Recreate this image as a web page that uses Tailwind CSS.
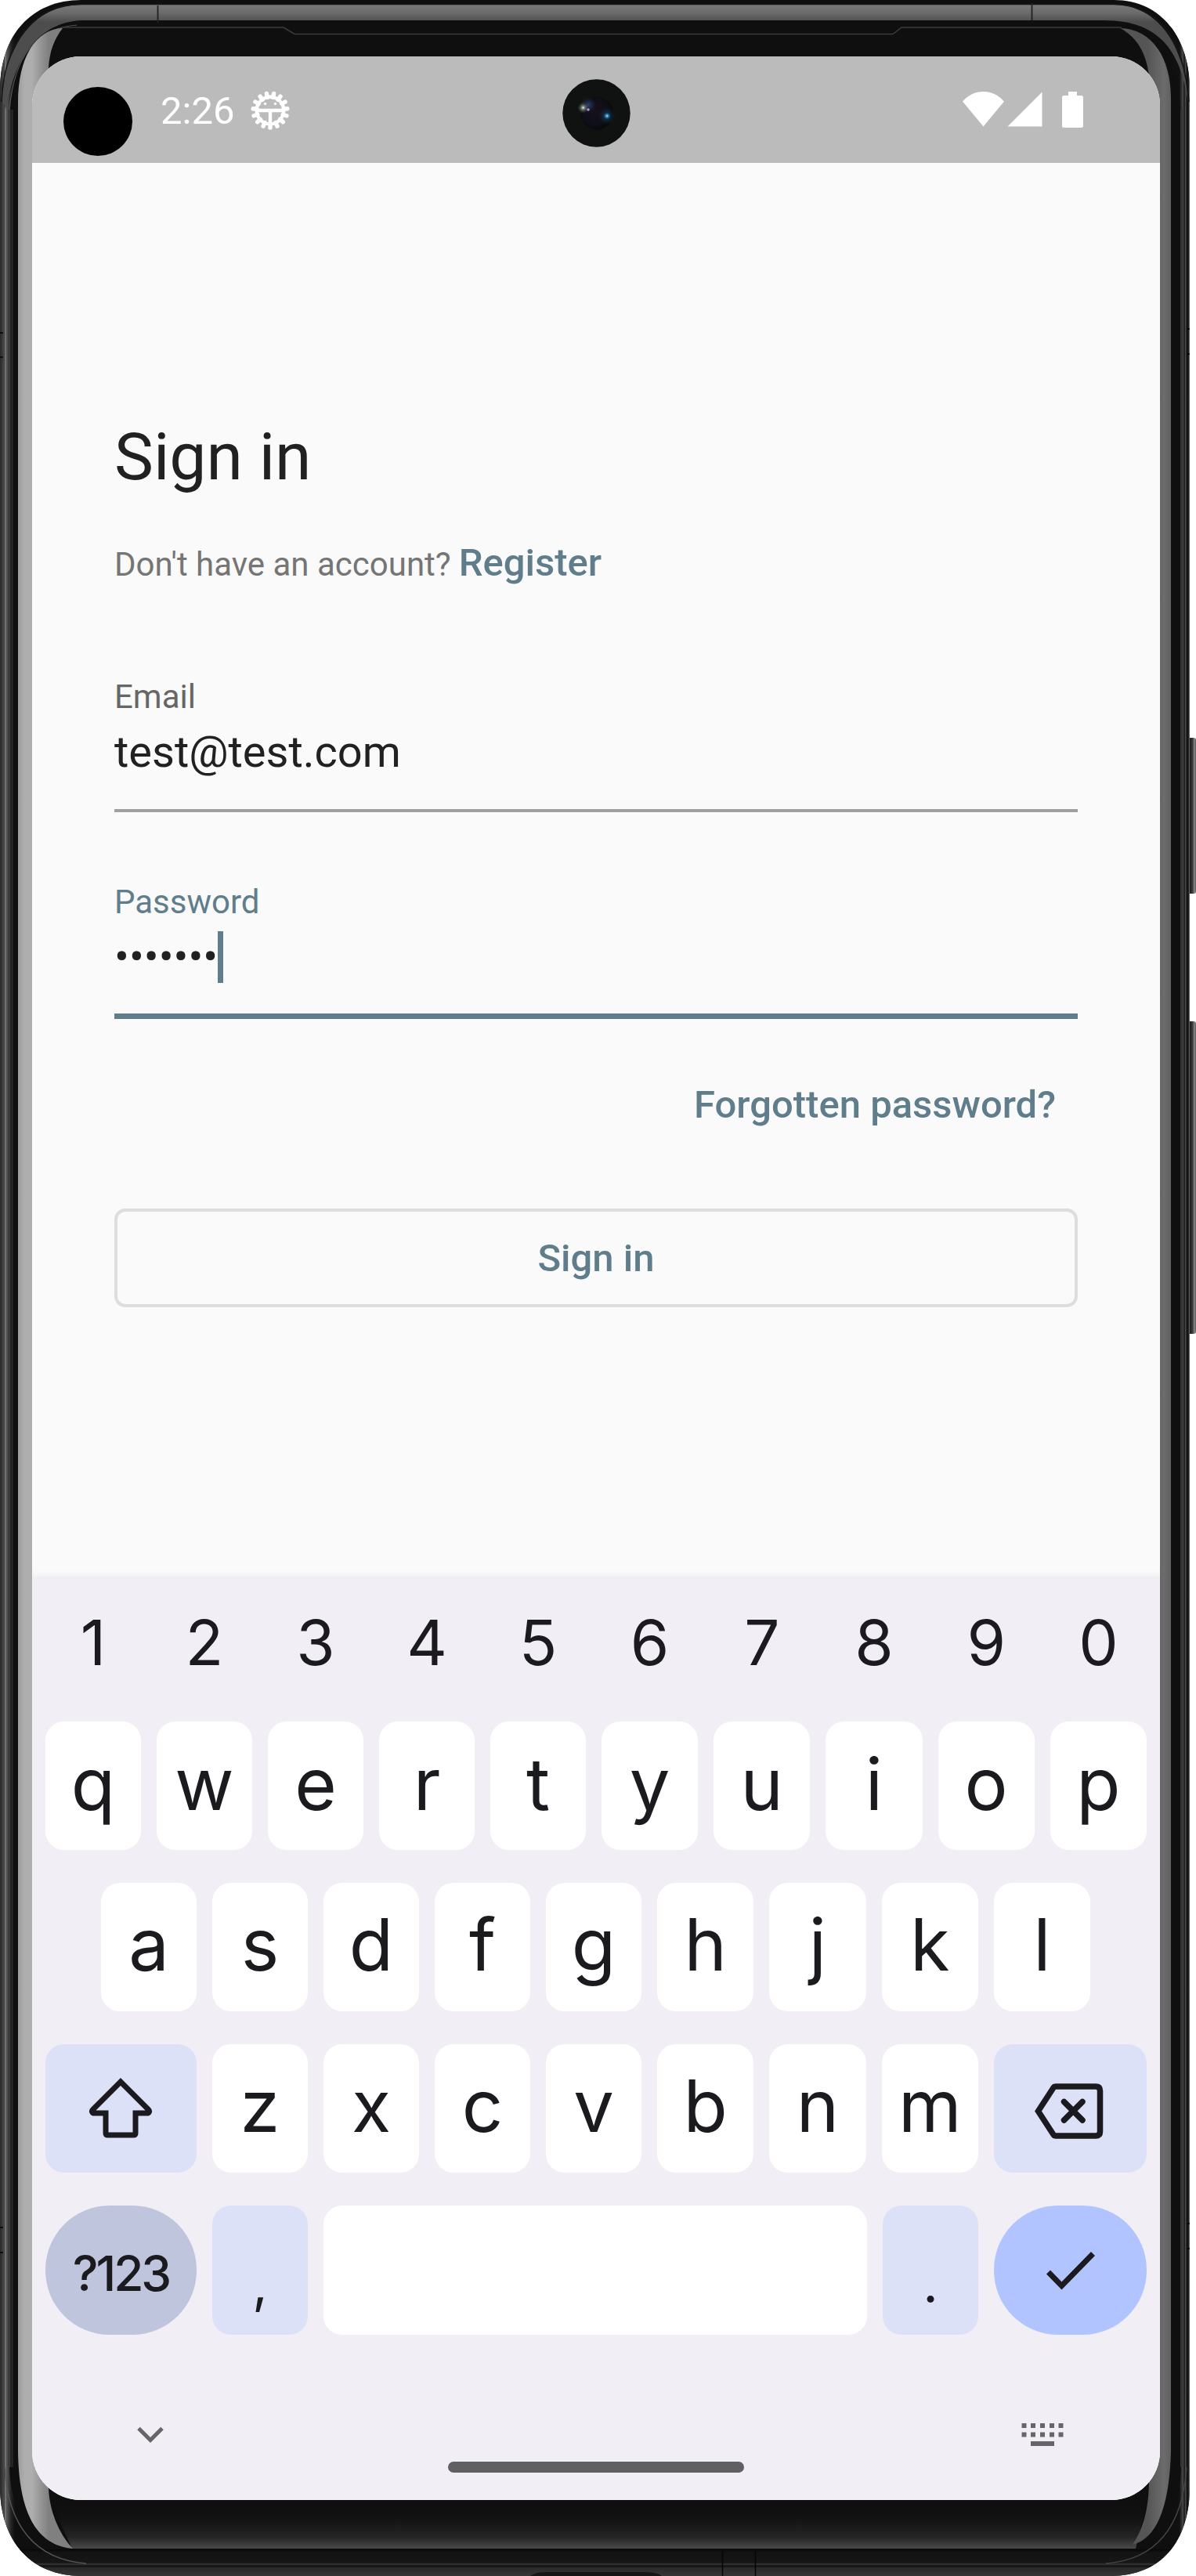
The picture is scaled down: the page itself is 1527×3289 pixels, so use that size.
<!DOCTYPE html>
<html lang="en">
<head>
<meta charset="utf-8">
<title>Sign in</title>
<script src="https://cdn.jsdelivr.net/npm/@tailwindcss/browser@4"></script>
</head>
<body class="bg-white">
<div class="relative h-[3289px] w-[1527px] overflow-hidden pt-[72px] pl-[41px] font-['Roboto',sans-serif]">

  <!-- Phone body -->
  <svg class="absolute inset-0" width="1527" height="3289" viewBox="0 0 1527 3289" fill="none">
    <defs>
      <linearGradient id="rimTop" x1="0" y1="5" x2="0" y2="28" gradientUnits="userSpaceOnUse"><stop offset="0" stop-color="#7b7b7b"/><stop offset=".5" stop-color="#6b6b6b"/><stop offset="1" stop-color="#4d4d4d"/></linearGradient>
      <linearGradient id="stripL" x1="23" y1="0" x2="62" y2="0" gradientUnits="userSpaceOnUse"><stop offset="0" stop-color="#9c9c9c"/><stop offset=".2" stop-color="#adadad"/><stop offset=".45" stop-color="#aeaeae"/><stop offset="1" stop-color="#808080"/></linearGradient>
      <linearGradient id="stripR" x1="1465" y1="0" x2="1495" y2="0" gradientUnits="userSpaceOnUse"><stop offset="0" stop-color="#555"/><stop offset=".7" stop-color="#6c6c6c"/><stop offset="1" stop-color="#606060"/></linearGradient>
      <linearGradient id="sideL" x1="0" y1="0" x2="24" y2="0" gradientUnits="userSpaceOnUse"><stop offset="0" stop-color="#1c1c1c"/><stop offset=".06" stop-color="#3c3c3c"/><stop offset=".12" stop-color="#222"/><stop offset=".17" stop-color="#6a6a6a"/><stop offset=".21" stop-color="#151515"/><stop offset=".26" stop-color="#7d7d7d"/><stop offset=".36" stop-color="#555"/><stop offset=".6" stop-color="#222"/><stop offset=".8" stop-color="#0f0f0f"/><stop offset="1" stop-color="#0f0f0f"/></linearGradient>
      <linearGradient id="sideR" x1="1494" y1="0" x2="1519" y2="0" gradientUnits="userSpaceOnUse"><stop offset="0" stop-color="#0f0f0f"/><stop offset=".48" stop-color="#111"/><stop offset=".58" stop-color="#333"/><stop offset=".68" stop-color="#4d4d4d"/><stop offset=".71" stop-color="#0c0c0c"/><stop offset=".8" stop-color="#555"/><stop offset=".84" stop-color="#111"/><stop offset=".93" stop-color="#161616"/><stop offset="1" stop-color="#808080"/></linearGradient>
      <linearGradient id="chin" x1="0" y1="3192" x2="0" y2="3255" gradientUnits="userSpaceOnUse"><stop offset="0" stop-color="#0e0e0e"/><stop offset=".35" stop-color="#111"/><stop offset=".75" stop-color="#242424"/><stop offset="1" stop-color="#4c4c4c"/></linearGradient>
      <linearGradient id="base" x1="0" y1="3255" x2="0" y2="3289" gradientUnits="userSpaceOnUse"><stop offset="0" stop-color="#070707"/><stop offset=".12" stop-color="#131313"/><stop offset=".5" stop-color="#161616"/><stop offset=".56" stop-color="#383838"/><stop offset=".62" stop-color="#0e0e0e"/><stop offset=".7" stop-color="#2a2a2a"/><stop offset="1" stop-color="#363636"/></linearGradient>
      <linearGradient id="key" x1="1518" y1="0" x2="1527" y2="0" gradientUnits="userSpaceOnUse"><stop offset="0" stop-color="#111"/><stop offset=".5" stop-color="#3a3a3a"/><stop offset=".8" stop-color="#8a8a8a"/><stop offset="1" stop-color="#555"/></linearGradient>
      <clipPath id="shell"><path d="M0 115C0 45 40 0 104 0H1422C1484 0 1519 50 1519 115V3175C1519 3245 1482 3289 1418 3289H104C40 3289 0 3245 0 3175Z"/></clipPath>
    </defs>
    <!-- side buttons -->
    <rect x="1514" y="942" width="13" height="199" rx="3" fill="url(#key)"/>
    <rect x="1514" y="1304" width="13" height="399" rx="3" fill="url(#key)"/>
    <g clip-path="url(#shell)">
      <rect width="1527" height="3289" fill="#0f0f0f"/>
      <rect width="24" height="3289" fill="url(#sideL)"/>
      <rect x="1494" width="33" height="3289" fill="url(#sideR)"/>
      <!-- bottom edge -->
      <rect y="3255" width="1527" height="34" fill="url(#base)"/>
      <path d="M677 3289C682 3285 690 3284 700 3284H822C832 3284 840 3285 845 3289Z" fill="#161616"/>
      <path d="M922.5 3257V3289M964.5 3257V3289" stroke="#050505" stroke-width="1.5"/>
      <!-- top band -->
      <path d="M3 130C6 62 40 6 104 6H1422C1478 7 1512 55 1517 130C1508 70 1484 26 1410 26H104C58 28 20 62 8 140Z" fill="url(#rimTop)"/>
      <path d="M2 130C5 56 42 5.500 104 5.500H1422C1480 5.500 1512 52 1518 130" stroke="#151515" stroke-width="1.500"/>
      <path d="M201.500 7V29M1317.500 4V26" stroke="#222" stroke-width="1.800"/>
      <!-- glass -->
      <path d="M12 150C16 78 42 33 100 31H1412C1474 33 1504 70 1508 150V3150C1505 3215 1480 3254 1412 3255H110C40 3252 14 3210 12 3150Z" fill="#0f0f0f"/>
      <path d="M12 140C18 74 44 36 98 32" stroke="#555" stroke-width="1.200"/>
      <rect x="10" y="140" width="3" height="3010" fill="#3b3b3b"/>
      <rect x="13" y="140" width="4" height="3010" fill="#242424"/>
      <rect x="1507" y="140" width="3" height="3010" fill="#333"/>
      <path d="M64 3192H1465L1450 3254H92Z" fill="url(#chin)"/>
      <path d="M80 35H362L376 43.500H1140L1151 35H1432" stroke="#3c3c3c" stroke-width="1.500"/>
      <!-- reflections along both edges -->
      <path d="M80 36C45 37 23 75 23 130V3130C24 3205 45 3250 93 3254C75 3235 63 3205 62 3177V87C63 66 69 50 80 36Z" fill="url(#stripL)"/>
      <path d="M1430 36C1472 37 1495 75 1495 125V3130C1493 3205 1475 3242 1446 3249C1459 3230 1467 3205 1467 3165V97C1464 70 1453 48 1430 36Z" fill="url(#stripR)"/>
      <!-- lower corner highlights -->
      <path d="M6 3150C10 3225 45 3268 110 3273" stroke="#555" stroke-width="1.500"/>
      <path d="M1515 3150C1510 3225 1478 3268 1412 3273" stroke="#444" stroke-width="1.500"/>
      <path d="M0 2844H4M0 2876H4M0 425H4M0 456H4M1515 2839H1519M1515 2871H1519M1515 420H1519M1515 452H1519" stroke="#050505" stroke-width="1.500"/>
    </g>
  </svg>

  <!-- Screen -->
  <div class="relative flex h-[3120px] w-[1440px] flex-col overflow-hidden rounded-[62px] bg-[#fafafa]">

    <!-- Status bar -->
    <header class="flex h-[136px] shrink-0 items-start bg-[#bbbbbb] pr-[98px] pl-10 text-white">
      <div class="mt-[39px] size-[88px] rounded-full bg-black"></div>
      <span class="mt-[41px] ml-[36px] text-[49px] leading-[58px]">2:26</span>
      <svg class="mt-[43px] ml-[20px]" width="52" height="52" viewBox="-26 -26 52 52">
        <g stroke="#fff" stroke-width="5.400" stroke-linecap="round">
          <path d="M0 17V22"/><path d="M0 17V22" transform="rotate(24)"/><path d="M0 17V22" transform="rotate(48)"/><path d="M0 17V22" transform="rotate(72)"/><path d="M0 17V22" transform="rotate(96)"/><path d="M0 17V22" transform="rotate(120)"/><path d="M0 17V22" transform="rotate(144)"/><path d="M0 17V22" transform="rotate(168)"/><path d="M0 17V22" transform="rotate(192)"/><path d="M0 17V22" transform="rotate(216)"/><path d="M0 17V22" transform="rotate(240)"/><path d="M0 17V22" transform="rotate(264)"/><path d="M0 17V22" transform="rotate(288)"/><path d="M0 17V22" transform="rotate(312)"/><path d="M0 17V22" transform="rotate(336)"/>
        </g>
        <circle r="17.300" fill="none" stroke="#fff" stroke-width="4.400"/>
        <path d="M-17 0H17M0 0V17" stroke="#fff" stroke-width="4.400"/>
        <circle cx="-6.500" cy="-8.500" r="1.800" fill="#fff"/><circle cx="6.500" cy="-8.500" r="1.800" fill="#fff"/>
      </svg>
      <svg class="mt-[45px] ml-auto" width="154" height="46" viewBox="0 0 154 46" fill="#fff">
        <path d="M26.500 44.500L0 12.500C7 4.500 16 0 26.500 0S46 4.500 53 12.500Z"/>
        <path d="M57.500 44.500H101.500V.5Z"/>
        <path d="M135 0H146V5H151.500Q154 5 154 7.500V43.500Q154 46 151.500 46H129.500Q127 46 127 43.500V7.500Q127 5 129.500 5H135Z"/>
      </svg>
    </header>

    <!-- Front camera -->
    <svg class="absolute top-[29px] left-[677px]" width="87" height="87" viewBox="0 0 87 87">
      <defs>
        <radialGradient id="lens" cx=".45" cy=".45" r=".55"><stop offset="0" stop-color="#17101c"/><stop offset=".7" stop-color="#0e0f18"/><stop offset="1" stop-color="#080a0b"/></radialGradient>
        <radialGradient id="blue"><stop offset="0" stop-color="#bfeaff"/><stop offset=".16" stop-color="#2f86b8"/><stop offset=".4" stop-color="#123a5c" stop-opacity=".6"/><stop offset="1" stop-color="#0e2238" stop-opacity="0"/></radialGradient>
        <radialGradient id="warm"><stop offset="0" stop-color="#f2f5e6"/><stop offset=".3" stop-color="#9aa596" stop-opacity=".7"/><stop offset="1" stop-color="#333c34" stop-opacity="0"/></radialGradient>
        <radialGradient id="haze"><stop offset="0" stop-color="#35507c" stop-opacity=".8"/><stop offset="1" stop-color="#22305a" stop-opacity="0"/></radialGradient>
      </defs>
      <circle cx="43.500" cy="43.500" r="43.200" fill="#101111"/>
      <circle cx="44" cy="43.500" r="21" fill="url(#lens)"/>
      <circle cx="33" cy="33" r="10" fill="url(#haze)"/>
      <circle cx="57" cy="47" r="11" fill="url(#blue)"/>
      <circle cx="26.500" cy="36.500" r="7.500" fill="url(#warm)"/>
      <circle cx="33" cy="39" r="1.800" fill="#b58bd0"/>
    </svg>

    <!-- Form -->
    <main class="flex h-[1805px] shrink-0 flex-col px-[105px]">
      <h1 class="mt-[327px] text-[84px] leading-[98px] text-[#212121]">Sign in</h1>
      <p class="mt-[57px] flex items-baseline gap-[10px] text-[42px] leading-[58px] text-[#757575]">Don't have an account? <a class="text-[49px] font-medium text-[#607d8b]">Register</a></p>

      <label class="mt-[115px] text-[42px] leading-[50px] text-[#666666]">Email</label>
      <div class="mt-[12px] text-[56px] leading-[66px] text-[#212121]">test@test.com</div>
      <div class="mt-[40px] h-[4px] shrink-0 bg-[#9f9f9f]"></div>

      <label class="mt-[90px] text-[42px] leading-[50px] text-[#607d8b]">Password</label>
      <div class="mt-[12px] flex h-[66px] items-stretch text-[56px] leading-[66px] text-[#212121]"><span>•••••••</span><span class="w-[7px] bg-[#607d8b]"></span></div>
      <div class="mt-[39px] h-[7px] shrink-0 bg-[#607d8b]"></div>

      <a class="mt-[81px] self-end pr-[28px] text-[49px] leading-[58px] font-medium text-[#607d8b]">Forgotten password?</a>
      <button class="mt-[103px] flex h-[126px] shrink-0 items-center justify-center rounded-[14px] border-4 border-[#dddddd] pt-[2px] text-[49px] leading-[58px] font-medium text-[#607d8b]">Sign in</button>
      <div class="mt-auto h-[8px] -mx-[105px] shrink-0 bg-linear-to-b from-[#fafafa] to-[#f3f3f4]"></div>
    </main>

    <!-- Keyboard -->
    <section class="flex grow flex-col bg-[#f1eff5] px-[17px] font-['Inter',sans-serif] text-[92px] text-[#1b1b1f]">
      <div class="mt-[44px] grid grid-cols-[repeat(5,122px)_repeat(5,1fr)] gap-x-5 text-center text-[80px] leading-[80px]">
        <span>1</span><span>2</span><span>3</span><span>4</span><span>5</span><span>6</span><span>7</span><span>8</span><span>9</span><span>0</span>
      </div>

      <div class="mt-[61px] flex flex-col gap-[42px]">
        <div class="grid h-[164px] grid-cols-[repeat(5,122px)_repeat(5,1fr)] gap-x-5 text-center leading-[159px]">
          <span class="rounded-3xl bg-white">q</span><span class="rounded-3xl bg-white">w</span><span class="rounded-3xl bg-white">e</span><span class="rounded-3xl bg-white">r</span><span class="rounded-3xl bg-white">t</span><span class="rounded-3xl bg-white">y</span><span class="rounded-3xl bg-white">u</span><span class="rounded-3xl bg-white">i</span><span class="rounded-3xl bg-white">o</span><span class="rounded-3xl bg-white">p</span>
        </div>
        <div class="grid h-[164px] grid-cols-[repeat(5,122px)_repeat(4,1fr)] gap-x-5 pr-[72px] pl-[71px] text-center leading-[158px]">
          <span class="rounded-3xl bg-white">a</span><span class="rounded-3xl bg-white">s</span><span class="rounded-3xl bg-white">d</span><span class="rounded-3xl bg-white">f</span><span class="rounded-3xl bg-white">g</span><span class="rounded-3xl bg-white">h</span><span class="rounded-3xl bg-white">j</span><span class="rounded-3xl bg-white">k</span><span class="rounded-3xl bg-white">l</span>
        </div>
        <div class="grid h-[164px] grid-cols-[193px_repeat(4,122px)_repeat(3,1fr)_195px] gap-x-5 text-center leading-[158px]">
          <span class="flex items-center justify-center rounded-3xl bg-[#dde1f8]">
            <svg width="82" height="80" viewBox="0 0 82 80" fill="none" stroke="#1b1b1f" stroke-width="7" class="mt-[-1px] mr-[2px]"><path d="M41 6L5.500 41.500C3.500 43.500 4.500 46 7.500 46H22V71.500Q22 74 24.500 74H57.500Q60 74 60 71.500V46H74.500C77.500 46 78.500 43.500 76.500 41.500Z"/></svg>
          </span>
          <span class="rounded-3xl bg-white">z</span><span class="rounded-3xl bg-white">x</span><span class="rounded-3xl bg-white">c</span><span class="rounded-3xl bg-white">v</span><span class="rounded-3xl bg-white">b</span><span class="rounded-3xl bg-white">n</span><span class="rounded-3xl bg-white">m</span>
          <span class="flex items-center justify-center rounded-3xl bg-[#dde1f8]">
            <svg width="90" height="72" viewBox="0 0 90 72" fill="none" stroke="#1b1b1f" stroke-width="7.500" class="mt-[6px] mr-[4px]"><path d="M28 5H79Q84.500 5 84.500 10.500V62.500Q84.500 68 79 68H28Q26 68 25 66.500L5.500 36.500L25 6.500Q26 5 28 5Z"/><path d="M38.500 24.500L62 48M62 24.500L38.500 48" stroke-linecap="round"/></svg>
          </span>
        </div>
        <div class="flex h-[165px] gap-x-5 text-center">
          <span class="w-[193px] rounded-[82px] bg-[#c0c5de] text-[62px] leading-[173px] font-medium tracking-[-3px]">?123</span>
          <span class="w-[122px] rounded-3xl bg-[#dde1f8] text-[68px] leading-[198px]">,</span>
          <span class="flex-1 rounded-3xl bg-white"></span>
          <span class="w-[122px] rounded-3xl bg-[#dde1f8] text-[68px] leading-[198px]">.</span>
          <span class="flex w-[195px] items-center justify-center rounded-[82px] bg-[#b2c4ff]">
            <svg width="66" height="52" viewBox="0 0 66 52" fill="none" stroke="#1b1b1f" stroke-width="7"><path d="M4.500 28L21.500 45.500L61.500 4.500"/></svg>
          </span>
        </div>
      </div>

      <div class="mt-[111px] flex h-[30px] items-start justify-between pr-[100px] pl-[116px]">
        <svg class="mt-[6px]" width="36" height="22" viewBox="0 0 36 22" fill="none" stroke="#666668" stroke-width="5"><path d="M3 2.500L18 17.500L33 2.500"/></svg>
        <svg class="mt-px mr-[6px]" width="54" height="30" viewBox="0 0 54 30" fill="#666668">
          <path d="M.5 1h6v6h-6zM12 1h6v6h-6zM24 1h6v6h-6zM36 1h6v6h-6zM47.500 1h6v6h-6zM.5 12.500h6v6h-6zM12 12.500h6v6h-6zM24 12.500h6v6h-6zM36 12.500h6v6h-6zM47.500 12.500h6v6h-6zM12 24h30v6h-30z"/>
        </svg>
      </div>
      <div class="mt-[21px] h-[14px] w-[378px] self-center rounded-full bg-[#606062]"></div>
    </section>
  </div>
</div>
</body>
</html>
